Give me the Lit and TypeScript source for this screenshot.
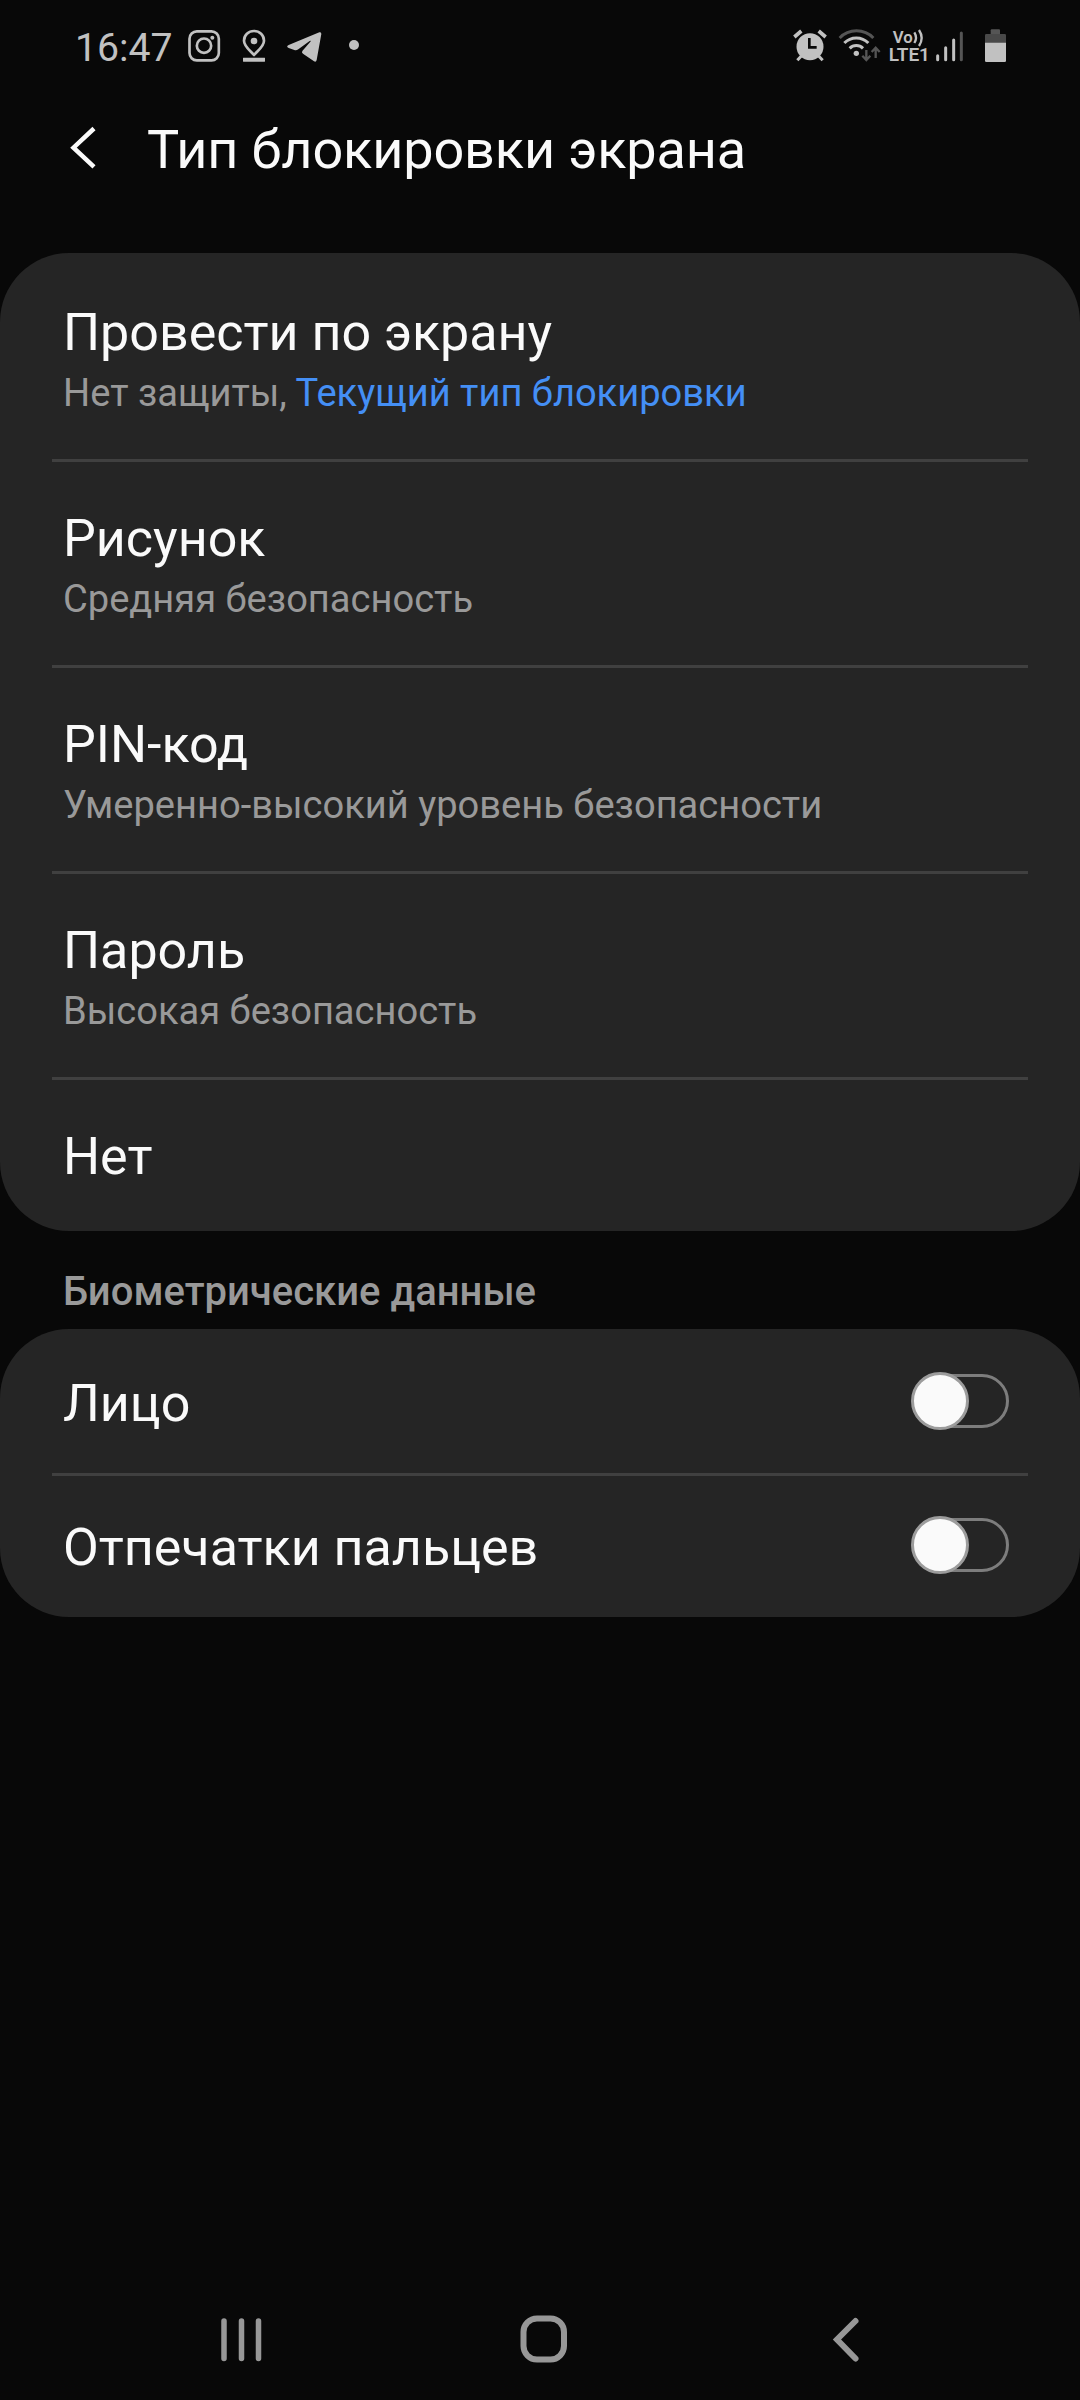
import { LitElement, html, css, nothing } from "lit";
import { customElement, property, state } from "lit/decorators.js";

interface LockType {
  title: string;
  note?: string;
  current?: string;
}

@customElement("status-bar")
export class StatusBar extends LitElement {
  static styles = css`
    :host {
      display: flex;
      justify-content: space-between;
      align-items: flex-start;
      box-sizing: border-box;
      height: 72px;
      padding: 25px 60px 0 75px;
      color: #c1c1c1;
      --dim: #555;
    }
    .group { display: flex; height: 40px; }
    .time { width: 112px; padding-top: 3px; font-size: 39.2px; line-height: 40px; }
    svg { display: block; height: 40px; fill: currentColor; }
    .line { fill: none; stroke: currentColor; }
    .cut { fill: none; stroke: #080808; }
    .dim { fill: var(--dim); }
    .dim-line { fill: none; stroke: var(--dim); }
    .net { font-weight: 600; }
  `;

  render() {
    return html`
      <div class="group">
        <span class="time">16:47</span>
        <svg width="40" viewBox="381 45 120 120">
          <rect class="line" x="388.500" y="64" width="88" height="87" rx="22" stroke-width="8" />
          <circle class="line" cx="432" cy="107" r="21.500" stroke-width="8" />
          <circle cx="457" cy="83" r="6" />
        </svg>
        <svg width="50" viewBox="501 45 150 120">
          <path class="line" stroke-width="8" stroke-linejoin="round"
            d="M582 135C570 121 552 109 552 92a30 29 0 0 1 60 0C612 109 594 121 582 135Z" />
          <circle cx="582" cy="93" r="10" />
          <rect x="549" y="143" width="66" height="12" rx="1" />
        </svg>
        <svg width="50" viewBox="651 45 150 120">
          <path d="M778 67L686 105Q677 110 686 114L703 120Q709 122 715 118L749 93Q755 90 751 95L727 123Q724 128 729 131L762 154Q768 158 770 150L784 72Q784 65 778 67Z" />
        </svg>
        <svg width="40" viewBox="801 45 120 120"><circle cx="882" cy="105" r="15" /></svg>
      </div>
      <div class="group">
        <svg width="40" viewBox="30 45 120 120">
          <circle cx="90" cy="110" r="40.500" />
          <path class="line" stroke-width="11" d="M43 81L64 63M116 63L137 81" />
          <path class="line" stroke-width="9" d="M64 138L52 151M116 138L128 151" />
          <path class="cut" stroke-width="8" d="M88 84V112H110" />
        </svg>
        <svg width="55" viewBox="150 45 165 120">
          <path class="dim-line" stroke-width="9" d="M179 84A70 70 0 0 1 280 84" />
          <path class="line" stroke-width="9" d="M193 99A50 50 0 0 1 265 99" />
          <path class="line" stroke-width="9" d="M209 115A28 28 0 0 1 249 115" />
          <circle cx="229" cy="130" r="8" />
          <path class="dim-line" stroke-width="7" d="M259 120V149M247 137L259 150L271 137M287 144V114M275 126L287 113L299 126" />
        </svg>
        <svg width="45" viewBox="315 45 135 120">
          <text class="net" x="338" y="99" font-size="51" textLength="60" lengthAdjust="spacingAndGlyphs">Vo</text>
          <text class="net" x="326" y="153" font-size="53" textLength="124" lengthAdjust="spacingAndGlyphs">LTE1</text>
          <path class="line" stroke-width="7" d="M403 67Q413 83 403 99M417 60Q433 84 417 108" />
        </svg>
        <svg width="40" viewBox="450 45 120 120">
          <path class="line" stroke-width="9" stroke-linecap="round" d="M473 137V149M497 113V149M521 90V149" />
          <path class="dim-line" stroke-width="9" stroke-linecap="round" d="M544 69V149" />
        </svg>
        <svg width="50" viewBox="570 45 150 120">
          <path class="dim" d="M632 61q0-3 3-3h22q3 0 3 3v11h-28z" />
          <path fill="#494949" d="M615 76q0-4 4-4h55q4 0 4 4v23h-63z" />
          <path d="M615 98h63v54q0 4-4 4h-55q-4 0-4-4z" />
        </svg>
      </div>
    `;
  }
}

@customElement("toggle-switch")
export class ToggleSwitch extends LitElement {
  static styles = css`
    :host { display: block; }
    svg { display: block; }
    .track { fill: none; stroke: #7d7d7d; stroke-width: 3; }
    .knob { fill: #fafafa; stroke: #9c9c9c; stroke-width: 3; }
  `;
  @property({ type: Boolean }) checked = false;

  render() {
    return html`
      <svg width="98" height="58" viewBox="0 0 98 58" role="switch" aria-checked=${this.checked}>
        <rect class="track" x="3.500" y="3.500" width="93" height="51" rx="25.500" />
        <circle class="knob" cx=${this.checked ? 69 : 29} cy="29" r="27.500" />
      </svg>
    `;
  }
}

@customElement("app-root")
export class AppRoot extends LitElement {
  static styles = css`
    :host {
      display: flex;
      flex-direction: column;
      box-sizing: border-box;
      width: 1080px;
      height: 2400px;
      background: #080808;
      color: #fafafa;
      font-family: Roboto, "Liberation Sans", sans-serif;
    }
    .header {
      display: flex;
      align-items: flex-start;
      height: 135px;
      padding: 46px 0 0 66px;
    }
    .back { display: block; margin-top: 5px; }
    .heading { margin: 0 0 0 49px; font-size: 54px; font-weight: 400; line-height: 64px; letter-spacing: -0.12px; }
    .card {
      margin: 0;
      padding: 0 52px;
      list-style: none;
      background: #252525;
      border-radius: 69px;
    }
    .row { box-sizing: border-box; height: 206px; padding: 50px 11px 0; }
    .row + .row { border-top: 3px solid #404040; padding-top: 47px; }
    .row.short { height: 154px; }
    .title { font-size: 52px; line-height: 60px; white-space: nowrap; }
    .note { margin-top: 8px; font-size: 38.1px; line-height: 44px; color: #999; white-space: nowrap; }
    .current { color: #448ff5; }
    .section {
      margin: 0;
      padding: 37px 63px 13px;
      font-size: 40px;
      line-height: 48px;
      font-weight: 500;
      color: #999;
    }
    .switch-row {
      display: flex;
      justify-content: space-between;
      align-items: flex-start;
      box-sizing: border-box;
      height: 144px;
      padding: 45px 19px 0 11px;
    }
    .switch-row + .switch-row { border-top: 3px solid #404040; padding-top: 42px; }
    .toggle { margin-top: -2px; }
    .nav { display: flex; margin-top: auto; padding: 0 0 34px 220px; }
    .nav svg { display: block; fill: none; stroke: #979797; stroke-width: 6; stroke-linecap: round; }
    .home { margin-left: 258px; }
    .return { margin-left: 264px; }
  `;

  @state() private lockTypes: LockType[] = [
    { title: "Провести по экрану", note: "Нет защиты, ", current: "Текущий тип блокировки" },
    { title: "Рисунок", note: "Средняя безопасность" },
    { title: "PIN-код", note: "Умеренно-высокий уровень безопасности" },
    { title: "Пароль", note: "Высокая безопасность" },
    { title: "Нет" },
  ];

  @state() private biometrics = [
    { title: "Лицо", on: false },
    { title: "Отпечатки пальцев", on: false },
  ];

  render() {
    return html`
      <status-bar></status-bar>
      <header class="header">
        <svg class="back" width="32" height="50" viewBox="0 0 32 50" fill="none" stroke="#fafafa" stroke-width="4.500">
          <path d="M28 5.500L7.500 24.700L28 43.900" />
        </svg>
        <h1 class="heading">Тип блокировки экрана</h1>
      </header>
      <ul class="card">
        ${this.lockTypes.map(
          (t) => html`
            <li class="row ${t.note ? "" : "short"}">
              <div class="title">${t.title}</div>
              ${t.note
                ? html`<div class="note">${t.note}${t.current ? html`<span class="current">${t.current}</span>` : nothing}</div>`
                : nothing}
            </li>
          `
        )}
      </ul>
      <h2 class="section">Биометрические данные</h2>
      <ul class="card">
        ${this.biometrics.map(
          (b) => html`
            <li class="switch-row">
              <div class="title">${b.title}</div>
              <toggle-switch class="toggle" ?checked=${b.on}></toggle-switch>
            </li>
          `
        )}
      </ul>
      <nav class="nav">
        <svg width="42" height="52" viewBox="220 2314 42 52">
          <path stroke-width="5.500" d="M224 2321V2358.500M241.500 2321V2358.500M258.500 2321V2358.500" />
        </svg>
        <svg class="home" width="48" height="52" viewBox="520 2314 48 52">
          <rect x="523.500" y="2318.500" width="40.500" height="41" rx="13.500" />
        </svg>
        <svg class="return" width="28" height="52" viewBox="832 2314 28 52">
          <path d="M855.500 2321L837 2339.500L855.500 2358.500" />
        </svg>
      </nav>
    `;
  }
}
